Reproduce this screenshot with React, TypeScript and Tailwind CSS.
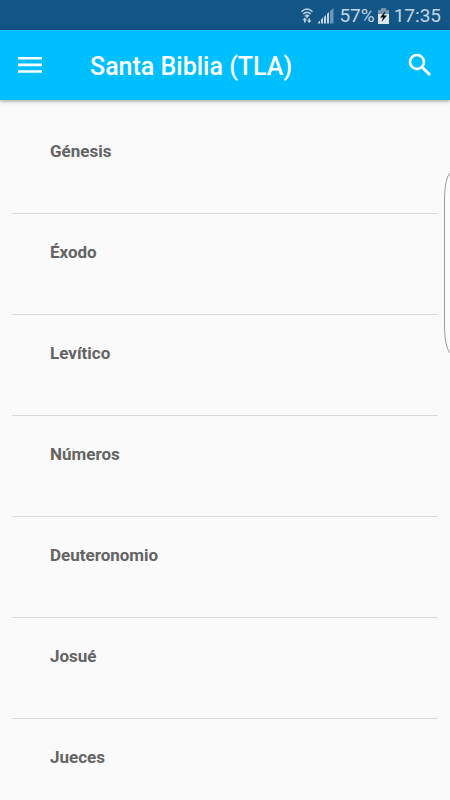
const books = ['Génesis', 'Éxodo', 'Levítico', 'Números', 'Deuteronomio', 'Josué', 'Jueces'];

function StatusBar() {
  return (
    <div className="flex h-[30px] items-center justify-end bg-[#125688] pr-[9px] pt-px text-[19px] leading-7 text-[#c4d5e1]">
      <svg className="mr-[5px] h-4 w-3" viewBox="0 0 12 16" fill="none" stroke="currentColor" strokeWidth="1.5" aria-hidden="true">
        <path d="M0.5 3.7Q6-1.7 11.5 3.7M2.3 6Q6 2.4 9.7 6M4 8.2Q6 6.5 8 8.2" />
        <circle cx="6" cy="9" r="1" fill="currentColor" stroke="none" />
        <path d="M1.5 12.2 3.8 9.5 6 12.2H4.6V14.5H3V12.2ZM6 12.4H7.4V10.4H9V12.4H10.5L8.2 15Z" fill="currentColor" stroke="none" />
      </svg>
      <svg className="mr-[5px] h-4 w-4" viewBox="0 0 16 16" fill="currentColor" aria-hidden="true">
        <path d="M0 15.5V14.5L2 12.5V15.5ZM3 15.5V11.5L5 9.5V15.5ZM6 15.5V9L8 7V15.5ZM9 15.5V6L11 4V15.5Z" />
        <path d="M12 15.5V3L15.5 0V15.5Z" opacity="0.5" />
      </svg>
      <span>57%</span>
      <svg className="ml-[3px] mr-[5px] h-4 w-[11px]" viewBox="0 0 11 16" aria-hidden="true">
        <path d="M3 0H8V2H11V7H0V2H3Z" fill="#7796ae" />
        <path d="M0 6H11V16H0Z" fill="#dce7ed" />
        <path d="M7.5 3 2 9.5H5L3.5 14 9 7.5H6Z" fill="#07131c" />
      </svg>
      <span>17:35</span>
    </div>
  );
}

export default function App() {
  return (
    <div className="relative h-screen overflow-hidden bg-[#fafafa] font-['Roboto',sans-serif]">
      <StatusBar />
      <header className="relative flex h-[70px] items-center bg-[#00bfff] px-[18px] text-white shadow-[0_1px_4px_rgba(0,0,0,0.4)]">
        <button type="button" aria-label="Menú" className="h-6 w-6">
          <svg viewBox="0 0 24 24" className="h-6 w-6" fill="currentColor" aria-hidden="true">
            <path d="M0 4H24V6.600H0ZM0 10.600H24V13.200H0ZM0 17.200H24V19.800H0Z" />
          </svg>
        </button>
        <h1 className="ml-12 flex-1 pt-1 text-[25px] font-medium leading-8">Santa Biblia (TLA)</h1>
        <button type="button" aria-label="Buscar" className="h-6 w-6">
          <svg viewBox="0 0 24 24" className="h-6 w-6" fill="none" stroke="currentColor" strokeWidth="2.6" aria-hidden="true">
            <circle cx="9" cy="9" r="7" />
            <path d="M14.200 14.200 22 22" strokeWidth="3" />
          </svg>
        </button>
      </header>
      <main>
        <ul className="px-3 pt-[13px]">
          {books.map((book) => (
            <li key={book} className="h-[101px] border-b border-[#d9d9d9]">
              <a href="#" className="block h-full px-[38px] pt-[26px] text-[17px] font-bold leading-6 text-[#646464]">
                {book}
              </a>
            </li>
          ))}
        </ul>
      </main>
      <div className="absolute top-[170px] right-0 h-[186px] w-[6px]" aria-hidden="true">
        <svg viewBox="0 0 6 186" className="h-full w-full">
          <path d="M7 2C2.500 6 .5 16 .5 32V154C.5 170 2.500 180 7 184" fill="#fcfcfc" stroke="#999999" />
        </svg>
      </div>
    </div>
  );
}
